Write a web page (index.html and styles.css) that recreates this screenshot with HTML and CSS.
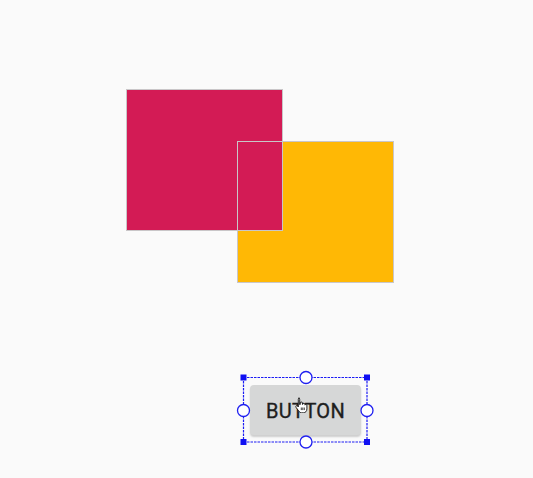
FILE: index.html
```html
<!DOCTYPE html>
<html>
<head>
<meta charset="utf-8">
<link rel="stylesheet" href="styles.css">
</head>
<body>
<div class="canvas">
  <div class="shape yellow"></div>
  <div class="shape pink"></div>
  <div class="outline o-pink"></div>
  <div class="outline o-yellow"></div>

  <div class="btn">BUTTON</div>
  <svg class="sel" width="140" height="82" viewBox="236 369 140 82">
    <g stroke="#1c1cf4" stroke-width="1.2" stroke-dasharray="2.5 1">
      <line x1="243.5" y1="377.5" x2="367" y2="377.5"/>
      <line x1="243.5" y1="442" x2="367" y2="442"/>
      <line x1="243.5" y1="377.5" x2="243.5" y2="442"/>
      <line x1="367" y1="377.5" x2="367" y2="442"/>
    </g>
    <rect x="240.5" y="374.5" width="6" height="6" fill="#0f0ff2"/>
    <rect x="364" y="374.5" width="6" height="6" fill="#0f0ff2"/>
    <rect x="240.5" y="439" width="6" height="6" fill="#0f0ff2"/>
    <rect x="364" y="439" width="6" height="6" fill="#0f0ff2"/>
    <circle cx="306" cy="377.5" r="6" fill="#fff" stroke="#2020f0" stroke-width="1.3"/>
    <circle cx="306" cy="442" r="6" fill="#fff" stroke="#2020f0" stroke-width="1.3"/>
    <circle cx="243.5" cy="410.5" r="6" fill="#fff" stroke="#2020f0" stroke-width="1.3"/>
    <circle cx="367" cy="410.5" r="6" fill="#fff" stroke="#2020f0" stroke-width="1.3"/>
  </svg>
  <svg class="cursor" width="13" height="16" viewBox="0 0 13 16">
    <path d="M3.5 1.2c.7 0 1.2.5 1.2 1.2v5.2l.5-.1V6c0-.6.5-1 1.1-1s1.1.4 1.1 1v1.4l.4-.1c.1-.6.5-1 1.1-1 .6 0 1 .4 1 1v.8c.2-.4.6-.6 1-.6.6 0 1 .4 1 1v3.4c0 2.2-1.4 3.9-3.600 3.9H6.6c-1.1 0-1.9-.5-2.6-1.4L1 10.3c-.4-.5-.3-1.1.2-1.5.5-.3 1.1-.2 1.4.2l.7.9V2.4c0-.7.5-1.2 1.2-1.2z" fill="#fff" stroke="#111" stroke-width="0.9" stroke-linejoin="round"/>
    <path d="M6.3 10.5v2.6M7.8 10.5v2.6M9.3 10.5v2.6" stroke="#111" stroke-width="0.8"/>
  </svg>
</div>
</body>
</html>
```
FILE: styles.css
```css
html, body {
  margin: 0;
  padding: 0;
  background: #fafafa;
}
.canvas {
  position: relative;
  width: 533px;
  height: 478px;
  overflow: hidden;
  font-family: Roboto, "Liberation Sans", sans-serif;
}
.shape {
  position: absolute;
}
.pink {
  left: 126px;
  top: 89px;
  width: 157px;
  height: 142px;
  background: #d31b55;
}
.yellow {
  left: 237px;
  top: 141px;
  width: 157px;
  height: 142px;
  background: #ffb805;
}
.outline {
  position: absolute;
  box-sizing: border-box;
  border: 1px solid #c9c6c8;
}
.o-pink {
  left: 126px;
  top: 89px;
  width: 157px;
  height: 142px;
}
.o-yellow {
  left: 237px;
  top: 141px;
  width: 157px;
  height: 142px;
}
.btn {
  position: absolute;
  left: 250px;
  top: 385px;
  width: 111px;
  height: 50px;
  border-radius: 4px;
  background: #d6d7d7;
  box-shadow: 0 2px 2px rgba(0,0,0,0.18);
  display: flex;
  align-items: center;
  justify-content: center;
  font-size: 20px;
  font-weight: 400;
  -webkit-text-stroke: 0.35px #1e1e1e;
  letter-spacing: 0.3px;
  color: #1e1e1e;
  padding-top: 2px;
  box-sizing: border-box;
}
.sel {
  position: absolute;
  left: 236px;
  top: 369px;
}
.cursor {
  position: absolute;
  left: 295px;
  top: 397px;
}
```
